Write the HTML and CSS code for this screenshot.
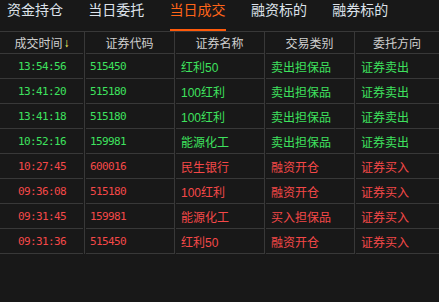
FILE: index.html
```html
<!DOCTYPE html>
<html lang="zh-CN">
<head>
    <meta charset="UTF-8">
    <meta name="viewport" content="width=device-width, initial-scale=1.0">
    <title>当日成交</title>
    <link rel="stylesheet" href="styles.css">
</head>
<body>
<div class="panel">
    <div class="tabs">
        <div class="tab">资金持仓</div>
        <div class="tab">当日委托</div>
        <div class="tab active">当日成交</div>
        <div class="tab">融资标的</div>
        <div class="tab">融券标的</div>
    </div>

    <div class="grid">
        <div class="row head">
            <div class="cell">成交时间<span class="sort">↓</span></div>
            <div class="cell">证券代码</div>
            <div class="cell">证券名称</div>
            <div class="cell">交易类别</div>
            <div class="cell">委托方向</div>
        </div>

        <div class="row sell">
            <div class="cell time">13:54:56</div>
            <div class="cell code">515450</div>
            <div class="cell">红利50</div>
            <div class="cell">卖出担保品</div>
            <div class="cell">证券卖出</div>
        </div>
        <div class="row sell">
            <div class="cell time">13:41:20</div>
            <div class="cell code">515180</div>
            <div class="cell">100红利</div>
            <div class="cell">卖出担保品</div>
            <div class="cell">证券卖出</div>
        </div>
        <div class="row sell">
            <div class="cell time">13:41:18</div>
            <div class="cell code">515180</div>
            <div class="cell">100红利</div>
            <div class="cell">卖出担保品</div>
            <div class="cell">证券卖出</div>
        </div>
        <div class="row sell">
            <div class="cell time">10:52:16</div>
            <div class="cell code">159981</div>
            <div class="cell">能源化工</div>
            <div class="cell">卖出担保品</div>
            <div class="cell">证券卖出</div>
        </div>
        <div class="row buy">
            <div class="cell time">10:27:45</div>
            <div class="cell code">600016</div>
            <div class="cell">民生银行</div>
            <div class="cell">融资开仓</div>
            <div class="cell">证券买入</div>
        </div>
        <div class="row buy">
            <div class="cell time">09:36:08</div>
            <div class="cell code">515180</div>
            <div class="cell">100红利</div>
            <div class="cell">融资开仓</div>
            <div class="cell">证券买入</div>
        </div>
        <div class="row buy">
            <div class="cell time">09:31:45</div>
            <div class="cell code">159981</div>
            <div class="cell">能源化工</div>
            <div class="cell">买入担保品</div>
            <div class="cell">证券买入</div>
        </div>
        <div class="row buy">
            <div class="cell time">09:31:36</div>
            <div class="cell code">515450</div>
            <div class="cell">红利50</div>
            <div class="cell">融资开仓</div>
            <div class="cell">证券买入</div>
        </div>
    </div>
</div>
</body>
</html>
```

FILE: styles.css
```css
body {
    margin: 0;
    background: #181818;
    font-family: "Liberation Sans", "Noto Sans CJK SC", sans-serif;
    font-size: 12px;
    color: #d0d0d0;
}

.panel {
    width: 439px;
    height: 302px;
    overflow: hidden;
}

.tabs {
    display: flex;
    height: 31px;
    padding-left: 7px;
    border-bottom: 1px solid #383838;
}

.tab {
    width: 56px;
    margin-right: 25.3px;
    padding-top: 2px;
    height: 29px;
    box-sizing: border-box;
    font-size: 14px;
    line-height: 17px;
    color: #dde2ea;
    white-space: nowrap;
}

.tab.active {
    color: #ff6418;
    height: 31px;
    border-bottom: 2px solid #ff5a0a;
    margin-bottom: -1px;
}

.row {
    display: grid;
    grid-template-columns: 85px 90px 90px 90px 84px;
    height: 25px;
}

.row.head {
    height: 22px;
}

.cell {
    box-sizing: border-box;
    display: flex;
    align-items: center;
    padding: 0 0 1px 6px;
    white-space: nowrap;
    border-right: 1px solid #383838;
    background: linear-gradient(#383838, #383838) 1px 100% / calc(100% - 1px) 1px no-repeat;
}

.cell:first-child {
    background-position: 0 100%;
}

.cell:last-child {
    border-right: none;
}

.head .cell {
    justify-content: center;
    padding-left: 0;
    color: #cfcfcf;
}

.sort {
    color: #ffff66;
    margin-left: 1px;
}

.cell.time {
    justify-content: center;
    padding-left: 0;
}

.cell.code {
    padding-left: 5px;
}

.time, .code {
    font-family: "DejaVu Sans Mono", monospace;
    font-size: 11px;
    letter-spacing: -0.6px;
}

.sell .cell {
    color: #3ee25e;
}

.buy .cell {
    color: #f54848;
}
```
